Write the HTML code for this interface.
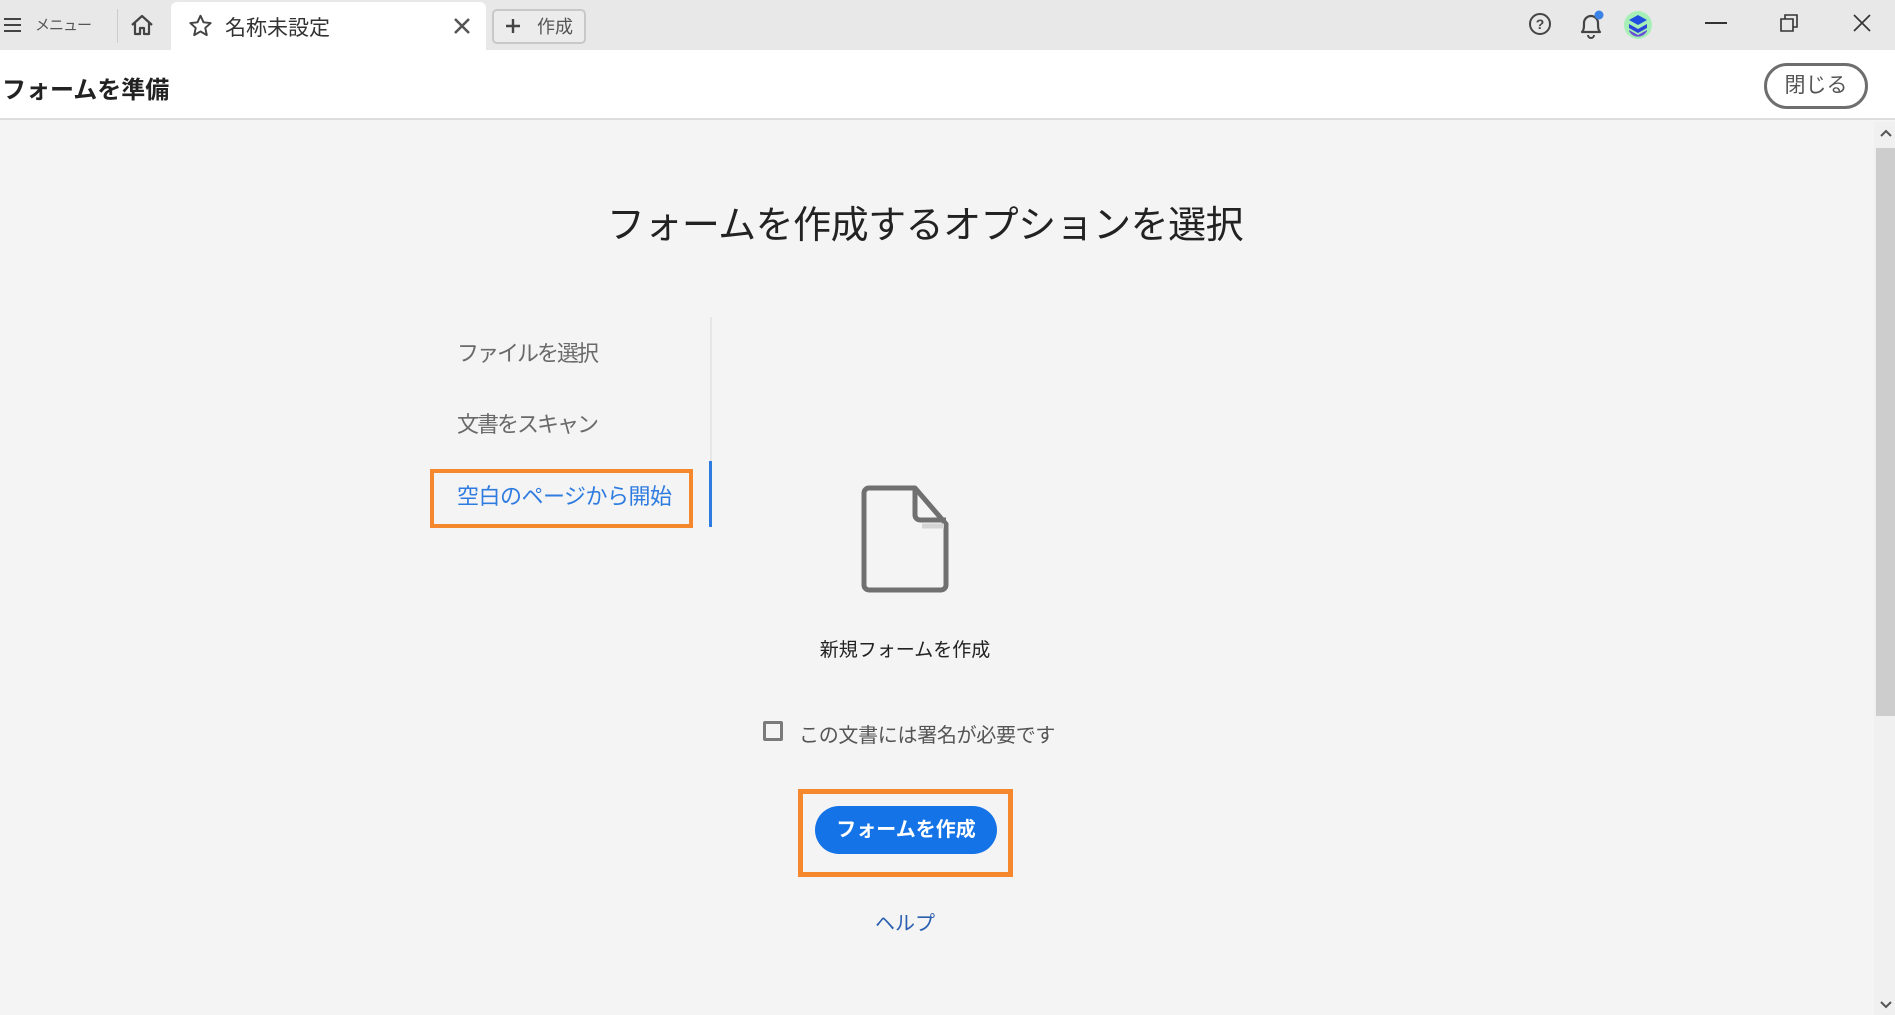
<!DOCTYPE html>
<html><head><meta charset="utf-8"><style>
*{margin:0;padding:0;box-sizing:border-box}
body{width:1895px;height:1015px;overflow:hidden;background:#f4f4f4;font-family:"Liberation Sans","Noto Sans CJK JP",sans-serif;position:relative;color:#222}
.a{position:absolute}
.top{left:0;top:0;width:1895px;height:50px;background:#e8e8e8}
.hdr{left:0;top:50px;width:1895px;height:70px;background:#fff;border-bottom:2px solid #dcdcdc}
.m{font-size:22px;letter-spacing:-2px;color:#6a6a6a}
</style></head><body>
<div class="a top"></div>
<svg class="a" style="left:3px;top:16px" width="20" height="18"><path d="M1 3h17M1 9h17M1 15h17" stroke="#444" stroke-width="2"/></svg>
<div class="a" style="left:35px;top:14px;font-size:15px;color:#555;letter-spacing:-1px">メニュー</div>
<div class="a" style="left:117px;top:9px;width:1px;height:34px;background:#ccc"></div>
<svg class="a" style="left:129px;top:13px" width="26" height="24" viewBox="0 0 26 24"><path d="M3 12L13 3l10 9M6 10v11h5v-6h4v6h5V10" fill="none" stroke="#444" stroke-width="2.2" stroke-linejoin="round"/></svg>
<div class="a" style="left:171px;top:2px;width:315px;height:48px;background:#fff;border-radius:6px 6px 0 0"></div>
<svg class="a" style="left:187px;top:13px" width="27" height="26" viewBox="0 0 24 24"><path d="M12 2.5l2.8 6.1 6.6.7-5 4.5 1.4 6.6L12 17l-5.8 3.4 1.4-6.6-5-4.5 6.6-.7z" fill="none" stroke="#444" stroke-width="1.8" stroke-linejoin="round"/></svg>
<div class="a" style="left:225px;top:12px;font-size:21px;color:#333">名称未設定</div>
<svg class="a" style="left:453px;top:17px" width="18" height="18"><path d="M2 2l14 14M16 2L2 16" stroke="#555" stroke-width="2.6"/></svg>
<div class="a" style="left:492px;top:9px;width:94px;height:35px;border:2px solid #c8c8c8;border-radius:5px;background:#ececec"></div>
<svg class="a" style="left:505px;top:18px" width="16" height="16"><path d="M8 1v14M1 8h14" stroke="#444" stroke-width="2.4"/></svg>
<div class="a" style="left:537px;top:13px;font-size:18px;color:#555">作成</div>
<svg class="a" style="left:1528px;top:12px" width="24" height="24"><circle cx="12" cy="12" r="10" fill="none" stroke="#444" stroke-width="2"/><text x="12" y="17" font-size="14" font-weight="bold" text-anchor="middle" fill="#444" font-family="Liberation Sans">?</text></svg>
<svg class="a" style="left:1577px;top:10px" width="28" height="30" viewBox="0 0 28 30"><path d="M5 22c2-2 2-5 2-9a7 7 0 0114 0c0 4 0 7 2 9z" fill="none" stroke="#444" stroke-width="2.2" stroke-linejoin="round"/><path d="M11 25a3 3 0 006 0" fill="none" stroke="#444" stroke-width="2"/><circle cx="22" cy="5" r="4.5" fill="#3b82e6"/></svg>
<svg class="a" style="left:1624px;top:11px" width="28" height="28" viewBox="0 0 28 28"><circle cx="14" cy="14" r="14" fill="#a6f0b8"/><path d="M14 4l9 5-9 5-9-5z" fill="#1e4fe0"/><path d="M5 13l9 5 9-5v4l-9 5-9-5z" fill="#2a45d8"/><path d="M5 19l9 5 9-5v1a10 10 0 01-18 0z" fill="#6a4fd6"/></svg>
<div class="a" style="left:1705px;top:22px;width:22px;height:2px;background:#333"></div>
<svg class="a" style="left:1780px;top:13px" width="20" height="20"><path d="M1 6h12v12H1zM5 6V2h12v12h-4" fill="none" stroke="#333" stroke-width="1.6"/></svg>
<svg class="a" style="left:1852px;top:13px" width="20" height="20"><path d="M2 2l16 16M18 2L2 18" stroke="#333" stroke-width="1.6"/></svg>
<div class="a hdr"></div>
<div class="a" style="left:2px;top:70px;font-size:24px;font-weight:bold;color:#222">フォームを準備</div>
<div class="a" style="left:1764px;top:63px;width:104px;height:46px;border:3px solid #6e6e6e;border-radius:23px;font-size:21px;color:#555;text-align:center;line-height:40px">閉じる</div>
<div class="a" style="left:1874px;top:122px;width:21px;height:893px;background:#f0f0f0"></div>
<svg class="a" style="left:1879px;top:128px" width="14" height="10"><path d="M2 8l5-5 5 5" fill="none" stroke="#555" stroke-width="2"/></svg>
<div class="a" style="left:1876px;top:148px;width:19px;height:568px;background:#cdcdcd"></div>
<svg class="a" style="left:1879px;top:1000px" width="14" height="10"><path d="M2 2l5 5 5-5" fill="none" stroke="#555" stroke-width="2"/></svg>
<div class="a" style="left:0;top:194px;width:1850px;text-align:center;font-size:38px;color:#222;letter-spacing:-0.5px">フォームを作成するオプションを選択</div>
<div class="a m" style="left:457px;top:336px">ファイルを選択</div>
<div class="a m" style="left:457px;top:407px">文書をスキャン</div>
<div class="a m" style="left:457px;top:479px;color:#2f7ce0;letter-spacing:-0.5px">空白のページから開始</div>
<div class="a" style="left:430px;top:469px;width:263px;height:59px;border:4px solid #f5872d"></div>
<div class="a" style="left:710px;top:317px;width:2px;height:145px;background:#e6e6e6"></div>
<div class="a" style="left:709px;top:461px;width:3px;height:66px;background:#2f7ce0"></div>
<svg class="a" style="left:860px;top:484px" width="92" height="112" viewBox="0 0 92 112"><path d="M9 4h46l31 36v61a5 5 0 01-5 5H9a5 5 0 01-5-5V9a5 5 0 015-5z" fill="none" stroke="#707070" stroke-width="5" stroke-linejoin="round"/><path d="M55 4v27a5 5 0 005 5h26" fill="none" stroke="#707070" stroke-width="5"/><path d="M62 42h22" stroke="#d4d4d4" stroke-width="5"/></svg>
<div class="a" style="left:0;top:635px;width:1810px;text-align:center;font-size:19px;color:#222">新規フォームを作成</div>
<div class="a" style="left:763px;top:721px;width:20px;height:20px;border:3px solid #7a7a7a;border-radius:2px"></div>
<div class="a" style="left:799px;top:719px;font-size:20px;color:#555;letter-spacing:-0.3px">この文書には署名が必要です</div>
<div class="a" style="left:798px;top:789px;width:215px;height:88px;border:5px solid #f5872d"></div>
<div class="a" style="left:815px;top:806px;width:182px;height:48px;border-radius:24px;background:#1473e6;color:#fff;font-weight:bold;font-size:20px;text-align:center;line-height:48px">フォームを作成</div>
<div class="a" style="left:0;top:907px;width:1810px;text-align:center;font-size:20px;color:#2a5fb0">ヘルプ</div>
</body></html>
